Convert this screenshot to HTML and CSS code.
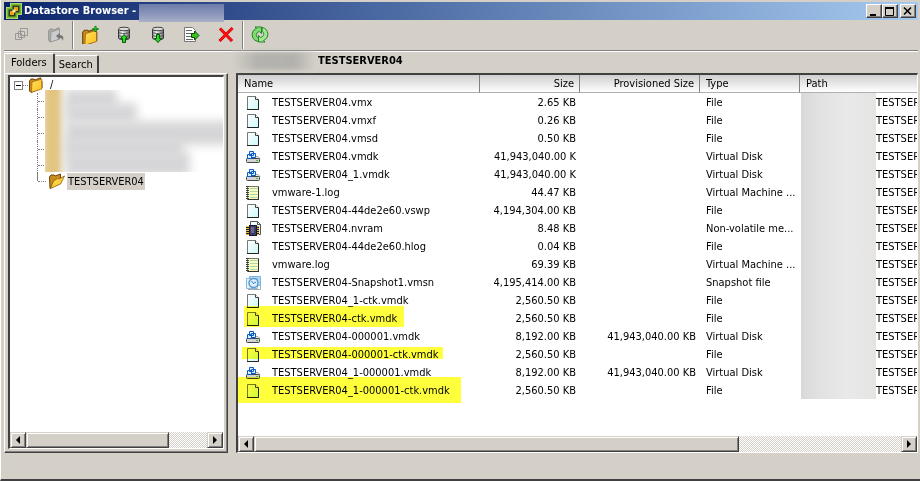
FILE: index.html
```html
<!DOCTYPE html>
<html lang="en">
<head>
<meta charset="utf-8">
<title>Datastore Browser</title>
<link rel="stylesheet" href="styles.css">
</head>
<body>
<svg class="sprite" aria-hidden="true">
  <defs>
    <linearGradient id="paper" x1="0" y1="0" x2="1" y2="1"><stop offset="0" stop-color="#fff"/><stop offset="1" stop-color="#cdf8fa"/></linearGradient>
    <linearGradient id="metal" x1="0" y1="0" x2="1" y2="0"><stop offset="0" stop-color="#888"/><stop offset=".35" stop-color="#fff"/><stop offset="1" stop-color="#666"/></linearGradient>
    <linearGradient id="gold" x1="0" y1="0" x2="1" y2="1"><stop offset="0" stop-color="#ffe060"/><stop offset="1" stop-color="#ffc01c"/></linearGradient>
  </defs>
  <symbol id="file" viewBox="0 0 16 16"><path d="M1.500 1.500H9.500L12.500 4.500V14.500H1.500Z" fill="url(#paper)" stroke="#777"/><path d="M1 14.500H12.500V4.500" fill="none" stroke="#222"/><path d="M9.500 1.500V4.500H12.500" fill="#fff" stroke="#444"/></symbol>
  <symbol id="disk" viewBox="0 0 16 16"><path d="M2.500 7.500H12L14 9.500H1Z" fill="#eee" stroke="#aaa"/><rect x=".5" y="9.500" width="13" height="4" rx="1" fill="#d4d4d4" stroke="#444"/><path d="M10 11.500H12" stroke="#4b4"/><path d="M3.500 2.500h4v4h-4zM1.500 5.500h4v4h-4zM5.500 4.500h4v4h-4z" fill="#d8efff" stroke="#0a5bc0"/></symbol>
  <symbol id="log" viewBox="0 0 16 16"><rect x="1.500" y="1.500" width="11" height="13" fill="#fbfbc0" stroke="#777"/><path d="M4 3.500H12M4 6.500H12M4 9.500H12M4 12.500H12" stroke="#a4d8b0"/><path d="M12.500 2V15M2 14.500H13" stroke="#333"/><path d="M1.500 1V15" stroke="#354535" stroke-width="3" stroke-dasharray="1 1"/></symbol>
  <symbol id="nvram" viewBox="0 0 16 16"><path d="M4.500 .5H11.500L14.500 3.500V13.500H4.500Z" fill="url(#paper)" stroke="#555"/><path d="M11.500 .5V3.500H14.500" fill="none" stroke="#555"/><path d="M1.500 5V14M11.500 5V14" stroke="#222" stroke-width="3"/><path d="M1.500 5V14M11.500 5V14" stroke="#f0b828" stroke-width="3" stroke-dasharray="1 1"/><rect x="3.500" y="4.500" width="7" height="10" fill="#3c3c66" stroke="#181830"/><path d="M5 6H8V12H5Z" fill="#66668e"/></symbol>
  <symbol id="snap" viewBox="0 0 16 16"><path d="M3.500 1.500h11v9h-11z" fill="#b5daf5" stroke="#7ab4e2"/><path d="M.5 3.500h11v10h-11z" fill="#e3f2fc" stroke="#86bce2"/><circle cx="7.500" cy="8" r="4.500" fill="#dceefb" stroke="#5c9ccf" stroke-width="1.500"/><path d="M5.500 6L7.500 8.500L10 7" fill="none" stroke="#337cb8"/><path d="M2 14.500H14.500V11" fill="none" stroke="#aaa"/></symbol>
  <symbol id="folder" viewBox="0 0 16 16"><path d="M1.500 4L3 2H6L7 3L12.500 .8V3L14 4V11L3 15.500L1.500 14Z" fill="#c98b1c" stroke="#70450c"/><path d="M4 5L13.800 2V12L3.500 15.200Z" fill="url(#gold)" stroke="#9a6510" stroke-width=".7"/></symbol>
  <symbol id="folder-open" viewBox="0 0 18 16"><path d="M1.500 4L3 2H6L7 3L12.500 1V9L2 15.500Z" fill="#c98b1c" stroke="#70450c"/><path d="M5.500 8L9.500 5.500L11 6L16.500 3L12.500 11L2.500 15.500Z" fill="url(#gold)" stroke="#8b5b10" stroke-width=".8"/></symbol>
  <symbol id="drum" viewBox="0 0 18 18"><path d="M3.500 3V12C4 14.500 14 14.500 14.500 12V3" fill="url(#metal)" stroke="#333"/><ellipse cx="9" cy="3" rx="5.500" ry="1.800" fill="#ddd" stroke="#444"/><path d="M3.500 6C5 8 13 8 14.500 6M3.500 9C5 11 13 11 14.500 9" fill="none" stroke="#555"/></symbol>
</svg>

<div class="window">
  <header class="titlebar">
    <svg class="app-icon" viewBox="0 0 16 16"><path d="M5 1H15V11H11V15H1V5H5Z" fill="#27421e" stroke="#d8efb0" stroke-width="2"/><path d="M5.500 1.500H14.500V10.500H10.500V14.500H1.500V5.500H5.500Z" fill="#27421e" stroke="#7ab82a" stroke-width="2"/><path d="M8 4H12V8H8ZM4 8H8V12H4Z" fill="#f0a020"/><path d="M6.500 6.500H9.500V9.500H6.500Z" fill="#ffe89a"/></svg>
    <h1 class="title">Datastore Browser -</h1>
    <span class="title-mask"></span>
    <div class="caption">
      <button class="cap" aria-label="Minimize"><svg viewBox="0 0 12 10"><path d="M2 9H8" stroke="#000" stroke-width="2"/></svg></button>
      <button class="cap" aria-label="Maximize"><svg viewBox="0 0 12 10"><path d="M1.500 1V9.500H9.500V1" fill="none" stroke="#000"/><path d="M1 2H10" stroke="#000" stroke-width="2"/></svg></button>
      <button class="cap close" aria-label="Close"><svg viewBox="0 0 12 10"><path d="M2 1.500L9 8.500M9 1.500L2 8.500" stroke="#000" stroke-width="1.600"/></svg></button>
    </div>
  </header>

  <div class="toolbar" role="toolbar" aria-label="Datastore actions">
    <div class="tools">
      <button class="tool" aria-label="Select" disabled><svg viewBox="0 0 18 18"><path d="M7.500 2.500h7v7h-7zM2.500 7.500h6v6h-6zM5.500 5.500h6v6h-6z" fill="none" stroke="#999"/></svg></button>
      <button class="tool" aria-label="Parent folder" disabled><svg viewBox="0 0 18 18"><path d="M1.500 5L3 3H6L7 4L12 1.500V13L3 16L1.500 14Z" fill="#aaa" stroke="#999"/><path d="M4 6L12.500 3V13L3.500 16Z" fill="#ccc" stroke="#999"/><path d="M9 10L12.500 7V9C16 9 17 11 16 15C15 12 14 12 12.500 12V13.500Z" fill="#777"/></svg></button>
    </div>
    <div class="tools">
      <button class="tool" aria-label="New folder"><svg viewBox="0 0 18 18"><svg x="0" y="2" width="15" height="15"><use href="#folder"/></svg><path d="M14.500 0V6M11.500 3H17.500" stroke="#0a7a0a" stroke-width="2"/><path d="M14.500 1V5M12.500 3H16.500" stroke="#20c020"/></svg></button>
      <button class="tool" aria-label="Upload"><svg viewBox="0 0 18 18"><use href="#drum"/><path d="M9 8.500L12.500 12.500H10.500V16.500H7.500V12.500H5.500Z" fill="#22dd22" stroke="#065806"/></svg></button>
      <button class="tool" aria-label="Download"><svg viewBox="0 0 18 18"><use href="#drum"/><path d="M9 16.500L5.500 12.500H7.500V8.500H10.500V12.500H12.500Z" fill="#22dd22" stroke="#065806"/></svg></button>
      <button class="tool" aria-label="Move to"><svg viewBox="0 0 18 18"><path d="M1.500 1.500H9.500L12.500 4.500V15.500H1.500Z" fill="#fff" stroke="#777"/><path d="M3 4.500H9M3 7.500H11M3 10.500H11M3 13.500H10" stroke="#666"/><path d="M8.500 7.500H11.500V5L16 9.500L11.500 14V11.500H8.500Z" fill="#3cc022" stroke="#064d06"/></svg></button>
      <button class="tool" aria-label="Delete"><svg viewBox="0 0 18 18"><path d="M3 2.500L15 15M15.500 2L2.500 15" stroke="#b00" stroke-width="3"/><path d="M3 2.500L15 15M15.500 2L2.500 15" stroke="#ff1010" stroke-width="2"/></svg></button>
    </div>
    <div class="tools">
      <button class="tool" aria-label="Refresh"><svg viewBox="0 0 18 18"><path d="M7.500 15.500C0 15 -1 4.500 5.500 2.500L4 1H10.500V7.500L8.500 5.500C4.500 6.500 4.500 11 7.500 12Z" fill="#83da6c" stroke="#21832a"/><path d="M11 1.500C18.500 2.500 18.500 12.500 12.500 14.500L14 16H7.500V9.500L9.500 11.500C13.500 10.500 13.500 6.500 11 5Z" fill="#a6e58f" stroke="#21832a"/></svg></button>
    </div>
  </div>

  <main class="workspace">
    <aside class="side">
      <div class="tabs" role="tablist">
        <button class="tab active" role="tab" aria-selected="true">Folders</button>
        <button class="tab" role="tab" aria-selected="false">Search</button>
      </div>
      <div class="tab-page">
        <div class="sunken tree-box">
          <div class="tree">
            <div class="node"><button class="expander" aria-label="Collapse"></button><span class="dots"></span><svg class="node-icon"><use href="#folder"/></svg><span class="root-name">/</span></div>
            <ul class="children">
              <li></li><li></li><li></li><li></li><li></li>
              <li><svg class="open-icon"><use href="#folder-open"/></svg><span class="selected">TESTSERVER04</span></li>
            </ul>
            <div class="tree-mask"><i class="gold"></i><i class="m1"></i><i class="m2"></i><i class="m3"></i><i class="m4"></i><i class="m5"></i></div>
          </div>
          <div class="scrollbar">
            <button class="sb left" aria-label="Scroll left"></button><div class="track"><div class="thumb side-thumb"></div></div><button class="sb right" aria-label="Scroll right"></button>
          </div>
        </div>
      </div>
    </aside>

    <section class="content">
      <h2 class="location"><span class="location-mask"></span>TESTSERVER04</h2>
      <div class="sunken list-box">
        <div class="list">
          <table>
            <colgroup><col class="c-name"><col class="c-size"><col class="c-prov"><col class="c-type"><col></colgroup>
            <thead><tr><th>Name</th><th class="num">Size</th><th class="num">Provisioned Size</th><th>Type</th><th>Path</th></tr></thead>
            <tbody>
              <tr><td><svg><use href="#file"/></svg>TESTSERVER04.vmx</td><td class="num">2.65 KB</td><td></td><td>File</td><td class="path">TESTSERVER04</td></tr>
              <tr><td><svg><use href="#file"/></svg>TESTSERVER04.vmxf</td><td class="num">0.26 KB</td><td></td><td>File</td><td class="path">TESTSERVER04</td></tr>
              <tr><td><svg><use href="#file"/></svg>TESTSERVER04.vmsd</td><td class="num">0.50 KB</td><td></td><td>File</td><td class="path">TESTSERVER04</td></tr>
              <tr><td><svg><use href="#disk"/></svg>TESTSERVER04.vmdk</td><td class="num">41,943,040.00 K</td><td></td><td>Virtual Disk</td><td class="path">TESTSERVER04</td></tr>
              <tr><td><svg><use href="#disk"/></svg>TESTSERVER04_1.vmdk</td><td class="num">41,943,040.00 K</td><td></td><td>Virtual Disk</td><td class="path">TESTSERVER04</td></tr>
              <tr><td><svg><use href="#log"/></svg>vmware-1.log</td><td class="num">44.47 KB</td><td></td><td>Virtual Machine ...</td><td class="path">TESTSERVER04</td></tr>
              <tr><td><svg><use href="#file"/></svg>TESTSERVER04-44de2e60.vswp</td><td class="num">4,194,304.00 KB</td><td></td><td>File</td><td class="path">TESTSERVER04</td></tr>
              <tr><td><svg><use href="#nvram"/></svg>TESTSERVER04.nvram</td><td class="num">8.48 KB</td><td></td><td>Non-volatile me...</td><td class="path">TESTSERVER04</td></tr>
              <tr><td><svg><use href="#file"/></svg>TESTSERVER04-44de2e60.hlog</td><td class="num">0.04 KB</td><td></td><td>File</td><td class="path">TESTSERVER04</td></tr>
              <tr><td><svg><use href="#log"/></svg>vmware.log</td><td class="num">69.39 KB</td><td></td><td>Virtual Machine ...</td><td class="path">TESTSERVER04</td></tr>
              <tr><td><svg><use href="#snap"/></svg>TESTSERVER04-Snapshot1.vmsn</td><td class="num">4,195,414.00 KB</td><td></td><td>Snapshot file</td><td class="path">TESTSERVER04</td></tr>
              <tr><td><svg><use href="#file"/></svg>TESTSERVER04_1-ctk.vmdk</td><td class="num">2,560.50 KB</td><td></td><td>File</td><td class="path">TESTSERVER04</td></tr>
              <tr><td class="marked mark-a"><svg><use href="#file"/></svg>TESTSERVER04-ctk.vmdk</td><td class="num">2,560.50 KB</td><td></td><td>File</td><td class="path">TESTSERVER04</td></tr>
              <tr><td><svg><use href="#disk"/></svg>TESTSERVER04-000001.vmdk</td><td class="num">8,192.00 KB</td><td class="num">41,943,040.00 KB</td><td>Virtual Disk</td><td class="path">TESTSERVER04</td></tr>
              <tr><td class="marked mark-b"><svg><use href="#file"/></svg>TESTSERVER04-000001-ctk.vmdk</td><td class="num">2,560.50 KB</td><td></td><td>File</td><td class="path">TESTSERVER04</td></tr>
              <tr><td><svg><use href="#disk"/></svg>TESTSERVER04_1-000001.vmdk</td><td class="num">8,192.00 KB</td><td class="num">41,943,040.00 KB</td><td>Virtual Disk</td><td class="path">TESTSERVER04</td></tr>
              <tr><td class="marked mark-c"><svg><use href="#file"/></svg>TESTSERVER04_1-000001-ctk.vmdk</td><td class="num">2,560.50 KB</td><td></td><td>File</td><td class="path">TESTSERVER04</td></tr>
            </tbody>
          </table>
        </div>
        <div class="scrollbar">
          <button class="sb left" aria-label="Scroll left"></button><div class="track"><div class="thumb list-thumb"></div></div><button class="sb right" aria-label="Scroll right"></button>
        </div>
      </div>
    </section>
  </main>
  <footer class="status"></footer>
</div>
</body>
</html>
```
FILE: styles.css
```css
* { box-sizing: border-box; }
body {
  margin: 0;
  background: #d4d0c8;
  color: #000;
  font: 11px/16px "DejaVu Sans Condensed", "Noto Sans", sans-serif;
}
button { font: inherit; color: inherit; padding: 0; border: 0; background: #d4d0c8; }
.sprite { position: absolute; width: 0; height: 0; }

.window {
  display: flex;
  flex-direction: column;
  min-height: 100vh;
  padding: 2px 2px 0 3px;
  border-left: 1px solid #fff;
  border-bottom: 2px solid #404040;
}

/* Title bar */
.titlebar {
  display: flex;
  align-items: center;
  height: 18px;
  padding: 0 2px;
  background: linear-gradient(90deg, #0a246a, #a6caf0);
}
.app-icon { width: 16px; height: 16px; margin-right: 2px; }
.title { margin: 0; color: #fff; font-size: 11px; font-weight: bold; line-height: 18px; white-space: nowrap; }
.title-mask {
  align-self: flex-start;
  width: 85px;
  height: 18px;
  margin: 2px 0 0 3px;
  background: linear-gradient(180deg, #6d7ba8, #8793b8 50%, #a9b1c8);
}
.caption { display: flex; margin-left: auto; }
.cap {
  width: 16px;
  height: 14px;
  border: 1px solid;
  border-color: #fff #404040 #404040 #fff;
  box-shadow: inset -1px -1px #808080;
}
.cap svg { display: block; width: 12px; height: 10px; margin-left: 1px; }
.close { margin-left: 2px; }

/* Toolbar */
.toolbar {
  display: flex;
  height: 32px;
  padding: 1px 0 1px 1px;
  border-bottom: 1px solid #fff;
  box-shadow: inset 0 -1px #808080;
}
.tools { display: flex; height: 28px; }
.tools:not(:last-child) { border-right: 1px solid #808080; box-shadow: 1px 0 #fff; }
.tool { display: grid; place-items: center; width: 34px; background: none; }
.tool:last-child { width: 33px; }
.tool svg { width: 18px; height: 18px; }

/* Panes */
.workspace { display: flex; flex: 1; gap: 8px; }
.side { display: flex; flex-direction: column; width: 224px; flex: none; }
.tabs { display: flex; align-items: flex-end; height: 21px; padding-top: 1px; }
.tab {
  height: 18px;
  padding: 0 4px;
  border: solid;
  border-width: 1px 2px 0 0;
  border-color: #fff #404040 #fff #fff;
  border-radius: 2px 2px 0 0;
}
.tab.active { height: 20px; padding: 0 6px 2px; border-left-width: 1px; }
.tab-page {
  display: flex;
  flex: 1;
  padding: 1px 3px 3px;
  border: 1px solid;
  border-color: #fff #404040 #404040 #fff;
  box-shadow: inset -1px -1px #808080;
}
.sunken {
  display: flex;
  flex: 1;
  flex-direction: column;
  min-width: 0;
  border: solid;
  border-width: 2px 1px 1px 2px;
  border-color: #404040 #fff #fff #404040;
  background: #fff;
}

/* Folder tree */
.tree { position: relative; flex: 1; padding: 0 0 0 4px; }
.node { display: flex; align-items: center; height: 16px; }
.expander {
  width: 9px;
  height: 9px;
  border: 1px solid #808080;
  background: linear-gradient(#000, #000) center / 5px 1px no-repeat #fff;
}
.dots { width: 5px; border-top: 1px dotted #808080; }
.node-icon { width: 16px; height: 16px; }
.root-name { margin-left: 6px; }
.children { margin: 0; padding: 0 0 0 23px; list-style: none; }
.children li {
  display: flex;
  align-items: center;
  height: 16px;
  border-left: 1px dotted #808080;
}
.children li::before { content: ""; width: 8px; border-top: 1px dotted #808080; }
.children li:last-child {
  border-image: linear-gradient(#808080 50%, transparent 50%) 1;
}
.open-icon { width: 18px; height: 16px; margin: 0 1px 0 2px; }
.selected { padding: 0 1px; background: #d4d0c8; line-height: 17px; white-space: nowrap; }
.tree-mask { position: absolute; inset: 13px 0 auto 35px; height: 82px; overflow: hidden; background: #fff; }
.tree-mask i { position: absolute; left: 20px; height: 20px; background: #d6d6d8; filter: blur(5px); }
.tree-mask .gold { left: -2px; top: -8px; width: 19px; height: 98px; background: #e3c582; filter: blur(3px); }
.tree-mask .m1 { top: -1px; width: 52px; }
.tree-mask .m2 { top: 13px; width: 72px; }
.tree-mask .m3 { top: 31px; width: 170px; height: 24px; }
.tree-mask .m4 { top: 48px; width: 118px; }
.tree-mask .m5 { top: 62px; width: 125px; height: 24px; }

/* Scroll bars */
.scrollbar { display: flex; height: 16px; }
.track {
  flex: 1;
  background: repeating-conic-gradient(#d4d0c8 0 25%, #fff 0 50%) 0 0 / 2px 2px;
}
.sb, .thumb {
  height: 16px;
  border: 1px solid;
  border-color: #d4d0c8 #404040 #404040 #d4d0c8;
  background: #d4d0c8;
  box-shadow: inset 1px 1px #fff, inset -1px -1px #808080;
}
.sb { display: grid; place-items: center; width: 16px; }
.sb::before { content: ""; border: 4px solid transparent; }
.left::before { border-left-width: 0; border-right-color: #000; }
.right::before { border-right-width: 0; border-left-color: #000; }
.side-thumb { width: 79%; }
.list-thumb { width: 75%; }

/* File list */
.content { display: flex; flex: 1; flex-direction: column; min-width: 0; }
.location {
  display: flex;
  height: 21px;
  margin: 0;
  font-size: 11px;
  font-weight: bold;
  line-height: 18px;
}
.location-mask {
  width: 84px;
  height: 18px;
  margin: 0 2px 0 -4px;
  background: linear-gradient(90deg, #d4d0c8, #b5b3af 30%, #b3b1ad 75%, #d4d0c8);
  filter: blur(2px);
}
.list { flex: 1; overflow: hidden; }
table { width: 100%; border-collapse: separate; border-spacing: 0; table-layout: fixed; }
.c-name { width: 242px; }
.c-size { width: 100px; }
.c-prov { width: 120px; }
.c-type { width: 100px; }
th {
  height: 18px;
  padding: 0 5px 0 6px;
  border-right: 1px solid #808080;
  border-bottom: 1px solid #b0b0b0;
  background: linear-gradient(#cfcfcf, #fff);
  font-weight: normal;
  line-height: 17px;
  text-align: left;
  white-space: nowrap;
}
th:last-child { border-right: 0; }
td { height: 18px; padding: 2px 4px 0 6px; overflow: hidden; line-height: 16px; white-space: nowrap; }
th.num, td.num { text-align: right; }
td svg { width: 16px; height: 16px; margin: 0 10px 0 2px; vertical-align: top; }
.path {
  padding-left: 76px;
  background: linear-gradient(90deg, #d9d9da, #e2e2e3 25%, #e9e9e9 65%, #e5e4e2) 1px 0 / 75px 100% no-repeat;
}

/* Highlighter marks */
.marked { position: relative; overflow: visible; }
.marked::after { content: ""; position: absolute; background: #ffff3c; mix-blend-mode: multiply; }
.mark-a::after { inset: -3px auto 0 6px; width: 160px; }
.mark-b::after { inset: 2px auto 4px 4px; width: 201px; }
.mark-c::after { inset: -4px auto -4px 0; width: 223px; }

.status { height: 26px; }
```
